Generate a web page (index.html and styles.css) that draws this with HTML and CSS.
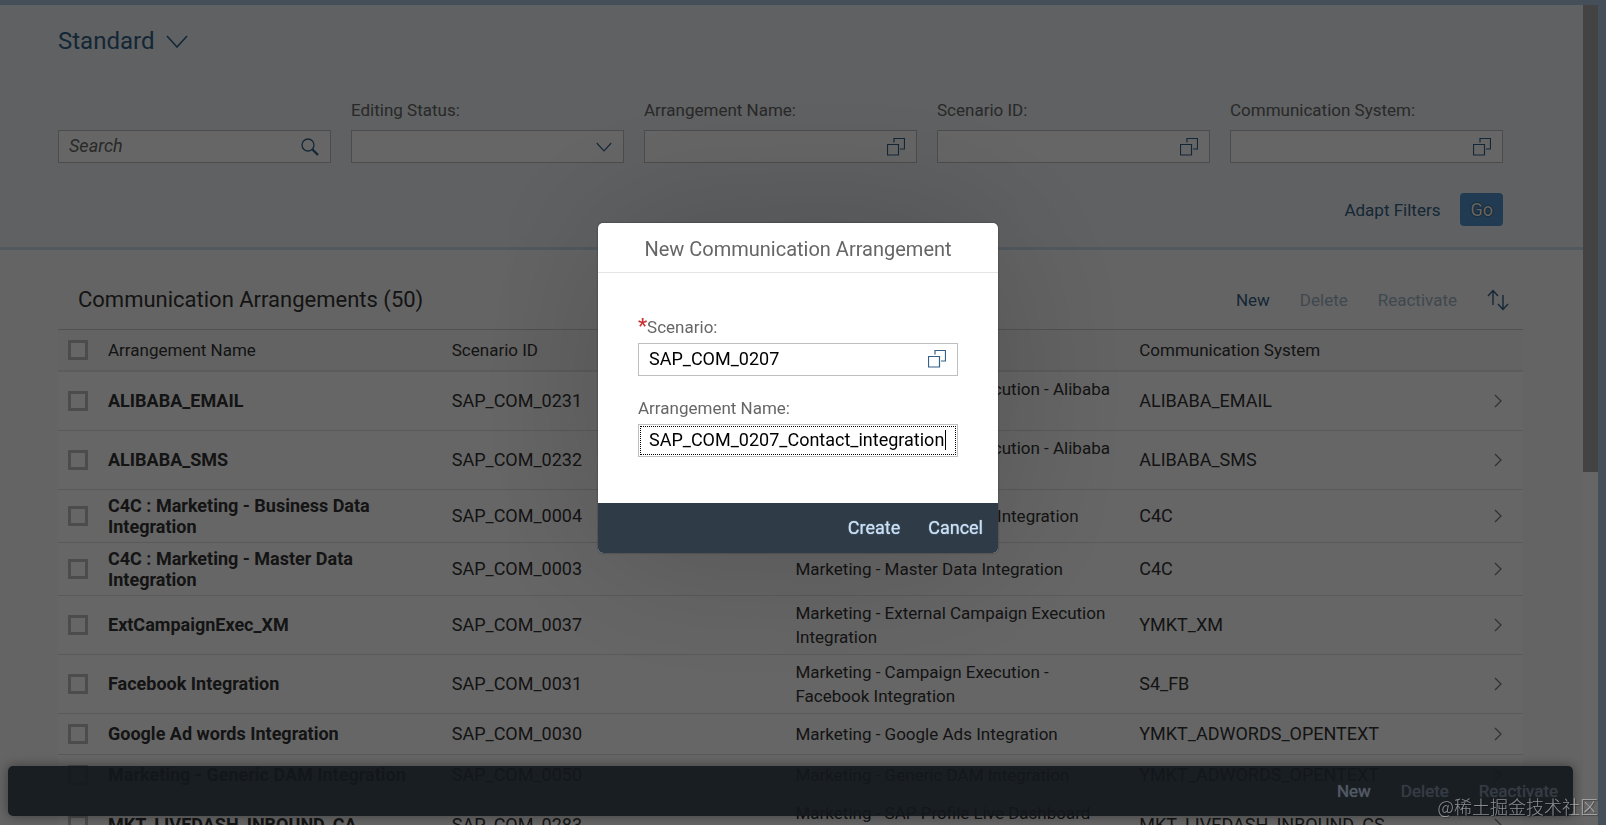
FILE: index.html
```html
<!DOCTYPE html>
<html lang="en">
<head>
    <meta charset="UTF-8">
    <meta name="viewport" content="width=device-width, initial-scale=1.0">
    <title>Communication Arrangements</title>
    <link rel="stylesheet" href="styles.css">
</head>
<body>
    <svg class="symbols" aria-hidden="true">
        <symbol id="icon-value-help" viewBox="0 0 18 18">
            <path d="M.5 6.500h11v10.500h-11zM7 4.500V.5h10.500v10.500h-4.500" fill="none" stroke="currentColor" stroke-width="1.2"/>
        </symbol>
        <symbol id="icon-down" viewBox="0 0 22 13">
            <path d="M1 1l10 11L21 1" fill="none" stroke="currentColor" stroke-width="1.6"/>
        </symbol>
        <symbol id="icon-right" viewBox="0 0 8 14">
            <path d="M1 1l6 6-6 6" fill="none" stroke="currentColor" stroke-width="1.2"/>
        </symbol>
    </svg>

    <div class="shell">
        <div class="page">
            <header class="filter-bar">
                <button class="variant" type="button">Standard
                    <svg class="variant-arrow"><use href="#icon-down"/></svg>
                </button>

                <form class="filters">
                    <div class="field">
                        <div class="input-box">
                            <input type="search" placeholder="Search" aria-label="Search">
                            <svg class="icon" viewBox="0 0 18 18"><circle cx="7" cy="7" r="6" fill="none" stroke="currentColor" stroke-width="1.3"/><path d="M11.5 11.5l5.5 5.5" stroke="currentColor" stroke-width="2.4"/></svg>
                        </div>
                    </div>
                    <div class="field">
                        <label for="status">Editing Status:</label>
                        <div class="input-box">
                            <select id="status"><option></option></select>
                            <svg class="icon-small"><use href="#icon-down"/></svg>
                        </div>
                    </div>
                    <div class="field">
                        <label for="filter-name">Arrangement Name:</label>
                        <div class="input-box">
                            <input type="text" id="filter-name">
                            <svg class="icon"><use href="#icon-value-help"/></svg>
                        </div>
                    </div>
                    <div class="field">
                        <label for="filter-scenario">Scenario ID:</label>
                        <div class="input-box">
                            <input type="text" id="filter-scenario">
                            <svg class="icon"><use href="#icon-value-help"/></svg>
                        </div>
                    </div>
                    <div class="field">
                        <label for="filter-system">Communication System:</label>
                        <div class="input-box">
                            <input type="text" id="filter-system">
                            <svg class="icon"><use href="#icon-value-help"/></svg>
                        </div>
                    </div>
                </form>

                <div class="filter-actions">
                    <button class="link-button" type="button">Adapt Filters</button>
                    <button class="go-button" type="button">Go</button>
                </div>
            </header>

            <main class="content">
                <div class="toolbar">
                    <h1>Communication Arrangements (50)</h1>
                    <button class="link-button" type="button">New</button>
                    <button class="link-button" type="button" disabled>Delete</button>
                    <button class="link-button" type="button" disabled>Reactivate</button>
                    <button class="link-button sort-button" type="button" aria-label="Sort">
                        <svg viewBox="0 0 22 22"><path d="M6 16V2M1 7l5-5.500 5 5.500M16 6v14M11 15l5 5.500 5-5.500" fill="none" stroke="currentColor" stroke-width="1.4"/></svg>
                    </button>
                </div>

                <table class="list">
                    <colgroup>
                        <col class="col-check">
                        <col>
                        <col>
                        <col>
                        <col>
                        <col class="col-nav">
                    </colgroup>
                    <thead>
                        <tr>
                            <th><input type="checkbox" aria-label="Select all"></th>
                            <th>Arrangement Name</th>
                            <th>Scenario ID</th>
                            <th>Scenario Text</th>
                            <th>Communication System</th>
                            <th></th>
                        </tr>
                    </thead>
                    <tbody>
                        <tr>
                            <td><input type="checkbox" aria-label="ALIBABA_EMAIL"></td>
                            <td class="name">ALIBABA_EMAIL</td>
                            <td class="code">SAP_COM_0231</td>
                            <td>Marketing - Campaign Execution - Alibaba Email Integration</td>
                            <td class="code">ALIBABA_EMAIL</td>
                            <td><svg class="nav"><use href="#icon-right"/></svg></td>
                        </tr>
                        <tr>
                            <td><input type="checkbox" aria-label="ALIBABA_SMS"></td>
                            <td class="name">ALIBABA_SMS</td>
                            <td class="code">SAP_COM_0232</td>
                            <td>Marketing - Campaign Execution - Alibaba SMS Integration</td>
                            <td class="code">ALIBABA_SMS</td>
                            <td><svg class="nav"><use href="#icon-right"/></svg></td>
                        </tr>
                        <tr>
                            <td><input type="checkbox" aria-label="C4C : Marketing - Business Data Integration"></td>
                            <td class="name">C4C : Marketing - Business Data Integration</td>
                            <td class="code">SAP_COM_0004</td>
                            <td>Marketing - Business Data Integration</td>
                            <td class="code">C4C</td>
                            <td><svg class="nav"><use href="#icon-right"/></svg></td>
                        </tr>
                        <tr>
                            <td><input type="checkbox" aria-label="C4C : Marketing - Master Data Integration"></td>
                            <td class="name">C4C : Marketing - Master Data Integration</td>
                            <td class="code">SAP_COM_0003</td>
                            <td>Marketing - Master Data Integration</td>
                            <td class="code">C4C</td>
                            <td><svg class="nav"><use href="#icon-right"/></svg></td>
                        </tr>
                        <tr>
                            <td><input type="checkbox" aria-label="ExtCampaignExec_XM"></td>
                            <td class="name">ExtCampaignExec_XM</td>
                            <td class="code">SAP_COM_0037</td>
                            <td>Marketing - External Campaign Execution Integration</td>
                            <td class="code">YMKT_XM</td>
                            <td><svg class="nav"><use href="#icon-right"/></svg></td>
                        </tr>
                        <tr>
                            <td><input type="checkbox" aria-label="Facebook Integration"></td>
                            <td class="name">Facebook Integration</td>
                            <td class="code">SAP_COM_0031</td>
                            <td>Marketing - Campaign Execution - Facebook Integration</td>
                            <td class="code">S4_FB</td>
                            <td><svg class="nav"><use href="#icon-right"/></svg></td>
                        </tr>
                        <tr>
                            <td><input type="checkbox" aria-label="Google Ad words Integration"></td>
                            <td class="name">Google Ad words Integration</td>
                            <td class="code">SAP_COM_0030</td>
                            <td>Marketing - Google Ads Integration</td>
                            <td class="code">YMKT_ADWORDS_OPENTEXT</td>
                            <td><svg class="nav"><use href="#icon-right"/></svg></td>
                        </tr>
                        <tr>
                            <td><input type="checkbox" aria-label="Marketing - Generic DAM Integration"></td>
                            <td class="name">Marketing - Generic DAM Integration</td>
                            <td class="code">SAP_COM_0050</td>
                            <td>Marketing - Generic DAM Integration</td>
                            <td class="code">YMKT_ADWORDS_OPENTEXT</td>
                            <td><svg class="nav"><use href="#icon-right"/></svg></td>
                        </tr>
                        <tr>
                            <td><input type="checkbox" aria-label="MKT_LIVEDASH_INBOUND_CA"></td>
                            <td class="name">MKT_LIVEDASH_INBOUND_CA</td>
                            <td class="code">SAP_COM_0283</td>
                            <td>Marketing - SAP Profile Live Dashboard Integration</td>
                            <td class="code">MKT_LIVEDASH_INBOUND_CS</td>
                            <td><svg class="nav"><use href="#icon-right"/></svg></td>
                        </tr>
                    </tbody>
                </table>
            </main>

            <footer class="page-footer">
                <button type="button">New</button>
                <button type="button" disabled>Delete</button>
                <button type="button" disabled>Reactivate</button>
            </footer>
        </div>
        <div class="scrollbar"><div class="thumb"></div></div>
    </div>

    <div class="overlay">
        <div class="dialog" role="dialog" aria-labelledby="dialog-title">
            <h2 id="dialog-title">New Communication Arrangement</h2>
            <div class="dialog-body">
                <div class="field">
                    <label class="required" for="scenario">Scenario:</label>
                    <div class="input-box">
                        <input type="text" id="scenario" value="SAP_COM_0207">
                        <svg class="icon"><use href="#icon-value-help"/></svg>
                    </div>
                </div>
                <div class="field">
                    <label for="name">Arrangement Name:</label>
                    <div class="input-box focused">
                        <input type="text" id="name" value="SAP_COM_0207_Contact_integration">
                        <span class="caret"></span>
                    </div>
                </div>
            </div>
            <div class="dialog-footer">
                <button type="button">Create</button>
                <button type="button">Cancel</button>
            </div>
        </div>
    </div>

    <div class="watermark">@稀土掘金技术社区</div>
</body>
</html>
```

FILE: styles.css
```css
* {
    box-sizing: border-box;
}
body {
    margin: 0;
    font-family: Roboto, "Liberation Sans", sans-serif;
    font-size: 17px;
    line-height: 24px;
    color: #333;
    background-color: #acc5e1;
    overflow: hidden;
}
button, input, select {
    font: inherit;
}
button {
    background: none;
    border: none;
    padding: 0;
    cursor: pointer;
}
svg {
    display: block;
}
.symbols {
    display: none;
}
.shell {
    display: flex;
    height: 100vh;
    padding: 5px 8px 0 0;
}
.page {
    position: relative;
    flex: 1;
    overflow: hidden;
    background-color: #fafafa;
}
.scrollbar {
    width: 15px;
    background-color: #fff;
}
.thumb {
    height: 57%;
    background-color: #a8a8a8;
}

/* filter bar */
.filter-bar {
    padding: 20px 80px 21px 58px;
    background-color: #eff2f5;
    border-bottom: 3px solid #cbdfee;
}
.variant {
    display: flex;
    align-items: center;
    gap: 12px;
    font-size: 24px;
    line-height: 32px;
    color: #346187;
}
.variant-arrow {
    width: 22px;
    height: 13px;
}
.filters {
    display: grid;
    grid-template-columns: repeat(5, 1fr);
    gap: 20px;
    align-items: end;
    margin-top: 41px;
}
.field {
    display: flex;
    flex-direction: column;
    gap: 4px;
}
.filters .field {
    gap: 8px;
}
.field label {
    color: #666;
}
.input-box {
    position: relative;
    display: flex;
    align-items: center;
    height: 33px;
    padding-right: 11px;
    background-color: #fff;
    border: 1px solid #bfbfbf;
    color: #346187;
}
.input-box input,
.input-box select {
    flex: 1;
    min-width: 0;
    height: 100%;
    padding: 0 0 2px 10px;
    border: none;
    outline: none;
    background: none;
    color: #000;
    font-size: 18px;
    appearance: none;
}
.input-box input::placeholder {
    color: #666;
    font-style: italic;
}
.icon {
    width: 18px;
    height: 18px;
}
.icon-small {
    width: 16px;
    height: 10px;
}
.filter-actions {
    display: flex;
    justify-content: flex-end;
    gap: 20px;
    margin-top: 30px;
}
.link-button {
    color: #346187;
}
.link-button:disabled {
    color: #a0b4c6;
}
.go-button {
    height: 33px;
    padding: 0 10px;
    border-radius: 4px;
    background-color: #5496cd;
    color: #fff;
    font-size: 18px;
    text-shadow: 0 0 2px #000;
}

/* table */
.content {
    padding: 30px 60px 0 58px;
}
.toolbar {
    display: flex;
    align-items: center;
    gap: 30px;
    height: 40px;
    padding: 0 14px 0 20px;
    margin-bottom: 9px;
}
.toolbar h1 {
    flex: 1;
    margin: 0;
    font-size: 22px;
    font-weight: 400;
}
.sort-button svg {
    width: 22px;
    height: 22px;
}
.list {
    width: 100%;
    table-layout: fixed;
    border-collapse: collapse;
    background-color: #fff;
    border-top: 1px solid #ccc;
}
.col-check {
    width: 40px;
}
.col-nav {
    width: 50px;
}
.list th {
    height: 41px;
    padding: 0 10px;
    background-color: #f7f7f7;
    border-bottom: 2px solid #e5e5e5;
    font-weight: 400;
    text-align: left;
}
.list td {
    height: 41px;
    padding: 5px 10px;
    border-bottom: 1px solid #e0e0e0;
}
.list .name {
    font-size: 18px;
    font-weight: 700;
    line-height: 21px;
}
.list .code {
    font-size: 18px;
}
.list input {
    display: block;
    width: 20px;
    height: 20px;
    margin: 0;
    appearance: none;
    border: 3px solid #bfbfbf;
    background-color: #fff;
}
.nav {
    width: 8px;
    height: 14px;
    margin-left: 11px;
    color: #777;
}
.page-footer {
    position: absolute;
    left: 8px;
    right: 10px;
    bottom: 9px;
    display: flex;
    align-items: center;
    justify-content: flex-end;
    gap: 30px;
    height: 50px;
    padding-right: 15px;
    border-radius: 5px;
    background-color: rgba(47, 60, 72, 0.92);
    box-shadow: 0 0 12px rgba(0, 0, 0, 0.4);
}
.page-footer button,
.dialog-footer button {
    color: #c8dff5;
    text-shadow: 0 0 1px #c8dff5;
}
.dialog-footer button {
    font-size: 18px;
}
.page-footer button:disabled {
    opacity: 0.5;
}

/* dialog */
.overlay {
    position: fixed;
    inset: 0;
    display: flex;
    align-items: center;
    justify-content: center;
    padding: 0 10px 50px 0;
    background-color: rgba(0, 0, 0, 0.6);
}
.dialog {
    width: 400px;
    border-radius: 5px;
    overflow: hidden;
    background-color: #fff;
    box-shadow: 0 0 160px rgba(0, 0, 0, 0.2), 0 0 2px rgba(0, 0, 0, 0.5);
}
.dialog h2 {
    margin: 0;
    padding: 4px 20px 0;
    border-bottom: 1px solid #e5e5e5;
    font-size: 20px;
    font-weight: 400;
    line-height: 45px;
    text-align: center;
    color: #666;
}
.dialog-body {
    display: flex;
    flex-direction: column;
    gap: 20px;
    padding: 42px 40px 46px;
}
.required::before {
    content: "*";
    color: #cc3333;
    font-size: 20px;
    font-weight: 700;
    line-height: 1;
}
.focused input {
    outline: 1px dotted #000;
    outline-offset: -2px;
    margin-right: -11px;
}
.caret {
    position: absolute;
    left: 306px;
    top: 5px;
    width: 1px;
    height: 20px;
    background-color: #000;
}
.dialog-footer {
    display: flex;
    align-items: center;
    justify-content: flex-end;
    gap: 28px;
    height: 50px;
    padding-right: 15px;
    background-color: #2f3c48;
}

.watermark {
    position: fixed;
    right: 8px;
    bottom: 7px;
    font-family: "Noto Sans CJK SC", sans-serif;
    font-size: 18px;
    font-weight: 300;
    color: rgba(255, 255, 255, 0.5);
    text-shadow: 1px 1px 1px rgba(0, 0, 0, 0.4);
}
```
